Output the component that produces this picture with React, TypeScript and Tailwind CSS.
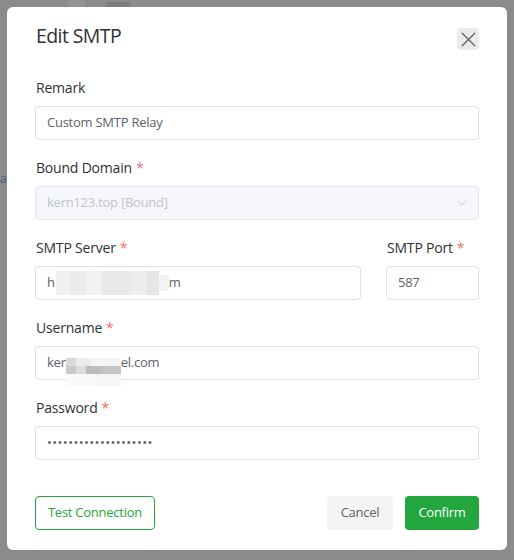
import { X, ChevronDown } from "lucide-react";

const font = { fontFamily: '"Open Sans", "Noto Sans", sans-serif' };

function Label({ text, required }: { text: string; required?: boolean }) {
  return (
    <div className="h-[20px] leading-[20px] text-[14px] text-[#303133] pl-[1px] tracking-[-0.2px]">
      {text}
      {required && <span className="text-[#f56c6c] ml-[4px]">*</span>}
    </div>
  );
}

function Box({ children, className = "" }: { children: React.ReactNode; className?: string }) {
  return (
    <div
      className={
        "h-[34px] border border-[#dcdfe6] rounded-[4px] flex items-center px-[11px] text-[13px] text-[#606266] tracking-[-0.25px] " +
        className
      }
    >
      {children}
    </div>
  );
}

export default function App() {
  return (
    <div className="relative w-[514px] h-[560px] bg-[#8b8b8b] p-[7px] overflow-hidden" style={font}>
      {/* page behind overlay */}
      <div className="absolute left-[68px] top-0 w-[17px] h-[7px] bg-[#939393]" />
      <div className="absolute left-[106px] top-[2px] w-[24px] h-[5px] bg-[#7d7d7d]" />
      <div className="absolute left-0 top-[172px] text-[12px] text-[#4a5a7a] leading-[14px]">a5</div>

      <div className="relative w-[500px] h-[543px] bg-white rounded-[6px] px-[28px] pt-[15px] pb-[20px] flex flex-col">
        <div className="flex items-start justify-between">
          <div className="text-[19.5px] leading-[28px] text-[#303133] pl-[1px] tracking-[-0.6px]">Edit SMTP</div>
          <div className="mt-[6px] w-[22px] h-[22px] rounded-[4px] bg-[#ebebeb] flex items-center justify-center overflow-hidden">
            <X size={25} strokeWidth={1.25} className="text-[#5f5f5f] shrink-0" />
          </div>
        </div>

        <div className="mt-[28px] flex flex-col gap-[18px]">
          <div className="flex flex-col gap-[8px]">
            <Label text="Remark" />
            <Box>Custom SMTP Relay</Box>
          </div>

          <div className="flex flex-col gap-[8px]">
            <Label text="Bound Domain" required />
            <Box className="bg-[#f5f7fa] border-[#e4e7ed] text-[#c0c4cc] justify-between pr-[8px]">
              <span>kern123.top [Bound]</span>
              <ChevronDown size={16} strokeWidth={1.2} className="text-[#c0c4cc]" />
            </Box>
          </div>

          <div className="flex gap-[25px]">
            <div className="flex-1 flex flex-col gap-[8px]">
              <Label text="SMTP Server" required />
              <Box>
                <span>h</span>
                <span className="inline-flex h-[24px] w-[103px] ml-[1px]">
                  <span className="w-[14px] bg-[#f0f0f0]" />
                  <span className="w-[16px] bg-[#ebebeb]" />
                  <span className="w-[15px] bg-[#f2f2f2]" />
                  <span className="w-[30px] bg-[#e9e9e9]" />
                  <span className="w-[16px] bg-[#ededed]" />
                  <span className="w-[12px] bg-[#e6e6e6]" />
                </span>
                <span className="inline-block w-[10px] h-[16px] bg-[#f3f3f3]" />
                <span>m</span>
              </Box>
            </div>
            <div className="w-[93px] flex flex-col gap-[8px]">
              <Label text="SMTP Port" required />
              <Box>587</Box>
            </div>
          </div>

          <div className="flex flex-col gap-[8px]">
            <Label text="Username" required />
            <Box>
              <span>ker</span>
              <span className="relative inline-flex flex-col w-[55px] h-[28px] mt-[18px]">
                <span className="flex h-[8px]">
                  <span className="w-[10px] bg-[#d8d8d8]" />
                  <span className="w-[15px] bg-[#ececec]" />
                  <span className="w-[30px] bg-[#f4f4f4]" />
                </span>
                <span className="flex h-[8px]">
                  <span className="w-[10px] bg-[#c9c9c9]" />
                  <span className="w-[10px] bg-[#dcdcdc]" />
                  <span className="w-[15px] bg-[#bdbdbd]" />
                  <span className="w-[20px] bg-[#c4c4c4]" />
                </span>
                <span className="flex h-[12px]">
                  <span className="w-[30px] bg-[#fafafa]" />
                  <span className="w-[25px] bg-[#f6f6f6]" />
                </span>
              </span>
              <span>el.com</span>
            </Box>
          </div>

          <div className="flex flex-col gap-[8px]">
            <Label text="Password" required />
            <Box>
              <span className="tracking-[0.4px]">••••••••••••••••••••</span>
            </Box>
          </div>
        </div>

        <div className="mt-auto flex items-center justify-between tracking-[-0.25px]">
          <button className="h-[34px] w-[120px] rounded-[4px] border border-[#22a83a] text-[#22a83a] text-[13px]">
            Test Connection
          </button>
          <div className="flex gap-[12px]">
            <button className="h-[34px] w-[66px] rounded-[4px] bg-[#f3f4f5] text-[#606266] text-[13px]">
              Cancel
            </button>
            <button className="h-[34px] w-[74px] rounded-[4px] bg-[#22a63d] text-white text-[13px]">
              Confirm
            </button>
          </div>
        </div>
      </div>
    </div>
  );
}
